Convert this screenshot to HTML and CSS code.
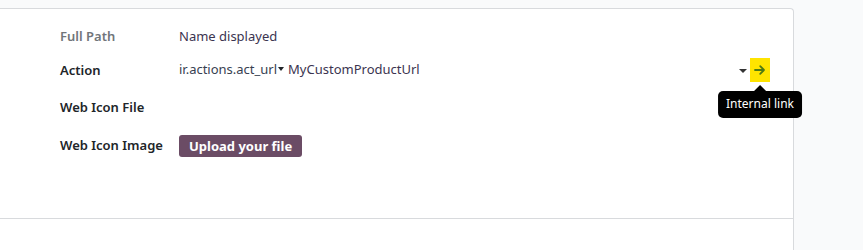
FILE: index.html
```html
<!DOCTYPE html>
<html>
<head>
<meta charset="utf-8">
<link rel="stylesheet" href="styles.css">
</head>
<body>
<div class="sheet">
  <div class="group">
    <div class="row r1">
      <div class="label muted">Full Path</div>
      <div class="value">Name displayed</div>
    </div>
    <div class="row r2">
      <div class="label">Action</div>
      <div class="value action">
        <span class="sel">ir.actions.act_url<span class="caret"></span></span>
        <span class="rec">MyCustomProductUrl</span>
        <span class="spacer"></span>
        <span class="caret big"></span>
        <span class="ext">
          <svg width="12" height="12" viewBox="0 0 12 12"><path d="M1 6h9M6.2 2.2L10 6l-3.8 3.8" fill="none" stroke="#4e7a14" stroke-width="1.8" stroke-linecap="round" stroke-linejoin="round"/></svg>
          <span class="tip">Internal link</span>
        </span>
      </div>
    </div>
    <div class="row r3">
      <div class="label">Web Icon File</div>
      <div class="value"></div>
    </div>
    <div class="row r4">
      <div class="label">Web Icon Image</div>
      <div class="value"><button class="upload">Upload your file</button></div>
    </div>
  </div>
  <div class="below"></div>
</div>
</body>
</html>
```

FILE: styles.css
```css
html, body {
  margin: 0;
  padding: 0;
  background: #f9fafb;
  font-family: "Noto Sans", "Liberation Sans", sans-serif;
  font-size: 13px;
  color: #212529;
  overflow: hidden;
}
.sheet {
  margin-top: 8px;
  margin-left: -4px;
  width: 798px;
  height: 242px;
  background: #fff;
  border: 1px solid #d8dadd;
  border-bottom: none;
  border-radius: 0 4px 0 0;
  box-sizing: border-box;
}
.group {
  padding: 15px 23px 0 63px;
  height: 210px;
  box-sizing: border-box;
  border-bottom: 1px solid #d8dadd;
}
.row {
  display: grid;
  grid-template-columns: 119px 1fr;
  align-items: center;
  height: 24px;
}
.r2 { margin-top: 10px; }
.r3 { margin-top: 13px; }
.r4 { margin-top: 14px; }
.label {
  font-weight: 600;
  color: #212529;
}
.label.muted { color: #71757a; }
.value { color: #374151; display: flex; align-items: center; }
.r1 .value { color: #3b3450; }
.action { position: relative; height: 24px; }
.action .sel, .action .rec { margin-top: -3px; }
.caret {
  display: inline-block;
  width: 0; height: 0;
  border-left: 3px solid transparent;
  border-right: 3px solid transparent;
  border-top: 4px solid #212529;
  vertical-align: 3px;
  margin-left: 1px;
}
.rec { margin-left: 4px; color: #3b3450; }
.spacer { flex: 1; }
.caret.big {
  border-left-width: 4px;
  border-right-width: 4px;
  border-top-width: 4px;
  border-top-color: #333;
  margin-right: 3px;
  margin-top: 2px;
}
.ext {
  position: relative;
  width: 20px;
  height: 24px;
  background: #ffe400;
  display: flex;
  align-items: center;
  justify-content: center;
}
.tip {
  position: absolute;
  top: 33px;
  left: 50%;
  transform: translateX(-50%);
  background: #000;
  color: #fff;
  font-weight: 400;
  font-size: 12px;
  white-space: nowrap;
  padding: 4px 8px 5px;
  border-radius: 5px;
  line-height: 18px;
}
.tip::before {
  content: "";
  position: absolute;
  top: -6px;
  left: 50%;
  margin-left: -6px;
  border-left: 6px solid transparent;
  border-right: 6px solid transparent;
  border-bottom: 6px solid #000;
}
.upload {
  font-family: inherit;
  font-size: 13px;
  font-weight: 700;
  color: #fff;
  background: #6b4c65;
  border: none;
  border-radius: 3px;
  padding: 0 10px;
  height: 22px;
  line-height: 22px;
  margin-top: 1px;
}
```
